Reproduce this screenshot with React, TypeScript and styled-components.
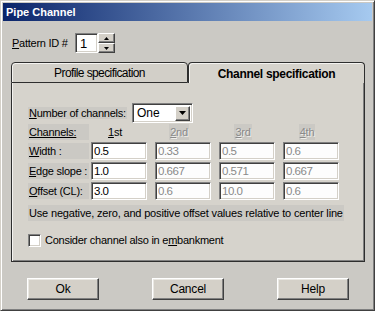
import React from 'react'
import styled, { createGlobalStyle, css } from 'styled-components'

const GlobalStyle = createGlobalStyle`
  html, body {
    margin: 0;
    padding: 0;
    background: #cbc9c4;
  }
  body {
    font-family: 'Liberation Sans', Arial, sans-serif;
    font-size: 11px;
    letter-spacing: -0.25px;
    color: #000;
  }
`

const sunken = css`
  box-sizing: border-box;
  border: 1px solid;
  border-color: #808080 #fff #fff #808080;
  box-shadow: inset 1px 1px #404040, inset -1px -1px #d4d0c8;
`

const raised = css`
  box-sizing: border-box;
  border: 1px solid;
  border-color: #fff #404040 #404040 #fff;
  box-shadow: inset -1px -1px #808080;
  background: #d4d0c8;
`

const Window = styled.div`
  width: 375px;
  height: 311px;
  box-sizing: border-box;
  background: #cbc9c4;
  border: 1px solid;
  border-color: #d4d0c8 #404040 #404040 #d4d0c8;
  box-shadow: inset 1px 1px #fff, inset -1px -1px #808080;
  padding: 2px;
  display: flex;
  flex-direction: column;
`

const TitleBar = styled.div`
  height: 18px;
  display: flex;
  align-items: center;
  padding-left: 3px;
  background: linear-gradient(to right, #0a246a, #a6caf0);
  color: #fff;
  font-weight: 700;
  font-size: 11px;
  letter-spacing: 0;
`

const Body = styled.div`
  display: flex;
  flex-direction: column;
  padding-top: 12px;
`

const PatternRow = styled.div`
  display: flex;
  align-items: center;
  height: 20px;
  margin-left: 9px;
`

const PatternLabel = styled.span`
  width: 63px;
`

const U = styled.span`
  text-decoration: underline;
`

const SpinInput = styled.div`
  ${sunken};
  width: 23px;
  height: 20px;
  background: #fff;
  display: flex;
  align-items: center;
  padding-left: 4px;
  font-size: 13px;
`

const SpinButtons = styled.div`
  display: flex;
  flex-direction: column;
  width: 17px;
  height: 20px;
`

const SpinButton = styled.div`
  ${raised};
  flex: 1;
  display: flex;
  align-items: center;
  justify-content: center;
`

const Tabs = styled.div`
  margin: 9px 7px 0 8px;
  display: flex;
  flex-direction: column;
`

const TabStrip = styled.div`
  display: flex;
  height: 21px;
`

const Tab = styled.div<{ $active?: boolean }>`
  flex: 1;
  box-sizing: border-box;
  display: flex;
  align-items: center;
  justify-content: center;
  border: 1px solid #2e2e2e;
  border-bottom: ${p => (p.$active ? 'none' : '1px solid #2e2e2e')};
  border-radius: 4px 4px 0 0;
  box-shadow: inset 1px 1px #f4f3f0;
  background: ${p => (p.$active ? '#d6d3cc' : '#d2cfc8')};
  font-size: 12px;
  font-weight: ${p => (p.$active ? 700 : 400)};
  letter-spacing: ${p => (p.$active ? '-0.3px' : '-0.6px')};
  padding-top: 1px;
`

const Panel = styled.div`
  height: 179px;
  box-sizing: border-box;
  border: 1px solid #2e2e2e;
  border-top: none;
  box-shadow: inset 1px 0 #f4f3f0, inset -1px -1px #808080;
  background: #d6d3cc;
  padding: 20px 0 0 16px;
  display: flex;
  flex-direction: column;
  align-items: flex-start;
`

const Caption = styled.span<{ $disabled?: boolean }>`
  background: ${p => (p.$disabled ? '#cbc9c4' : 'transparent')};
  white-space: nowrap;
  padding: 0 1px;
  line-height: 16px;
  color: ${p => (p.$disabled ? '#8a8a8a' : '#000')};
  text-shadow: ${p => (p.$disabled ? '1px 1px #f0efec' : 'none')};
`

const CountRow = styled.div`
  display: flex;
  align-items: center;
  height: 20px;
`

const CountLabel = styled.div`
  width: 104px;
`

const CountCaption = styled.span`
  background: #cbc9c4;
  white-space: nowrap;
  padding: 0 1px;
  line-height: 16px;
`

const Combo = styled.div`
  ${sunken};
  width: 61px;
  height: 20px;
  background: #fff;
  display: flex;
  align-items: center;
  padding: 2px 2px 2px 4px;
  font-size: 12px;
  letter-spacing: 0;
`

const ComboText = styled.span`
  flex: 1;
`

const DropButton = styled.div`
  ${raised};
  width: 15px;
  height: 15px;
  display: flex;
  align-items: center;
  justify-content: center;
`

const Grid = styled.div`
  margin-top: 1px;
  display: grid;
  grid-template-columns: 55px repeat(4, 56px);
  grid-template-rows: 16px repeat(3, 18px);
  column-gap: 8px;
  row-gap: 2px;
  align-items: center;
`

const RowLabel = styled.div`
  width: 60px;
  background: #cbc9c4;
  white-space: nowrap;
  line-height: 16px;
  padding-left: 1px;
`

const ColHead = styled.div`
  display: flex;
  justify-content: center;
  padding-right: 8px;
`

const Field = styled.input`
  ${sunken};
  width: 56px;
  height: 18px;
  margin: 0;
  padding: 0 0 0 2px;
  background: #fff;
  font-family: 'Liberation Sans', Arial, sans-serif;
  font-size: 11.5px;
  letter-spacing: -0.5px;
  color: #000;
  outline: none;
  &:disabled {
    color: #8a8a8a;
    background: #fdfdfd;
  }
`

const Note = styled.div`
  margin-top: 5px;
  height: 16px;
  line-height: 16px;
  background: #cbc9c4;
  padding: 0 1px;
  white-space: nowrap;
  letter-spacing: -0.17px;
`

const CheckRow = styled.label`
  margin-top: 11px;
  height: 16px;
  display: flex;
  align-items: center;
  gap: 4px;
`

const CheckBox = styled.span`
  ${sunken};
  width: 13px;
  height: 13px;
  background: #fff;
`

const ButtonRow = styled.div`
  display: flex;
  gap: 53px;
  margin-top: 16px;
  padding-left: 24px;
`

const Button = styled.button`
  ${raised};
  width: 72px;
  height: 22px;
  margin: 0;
  padding: 0;
  font-family: 'Liberation Sans', Arial, sans-serif;
  font-size: 12px;
  letter-spacing: -0.2px;
  color: #000;
  box-shadow: inset -1px -1px #808080, inset 1px 1px #eae8e3;
`

const Arrow = ({ dir, size }: { dir: 'up' | 'down'; size: number }) => {
  const h = Math.ceil(size / 2)
  return (
    <svg width={size} height={h} viewBox={`0 0 ${size} ${h}`}>
      {dir === 'up' ? (
        <polygon points={`0,${h} ${size},${h} ${size / 2},0`} fill="#000" />
      ) : (
        <polygon points={`0,0 ${size},0 ${size / 2},${h}`} fill="#000" />
      )}
    </svg>
  )
}

const rows = [
  { label: <><U>W</U>idth :</>, values: ['0.5', '0.33', '0.5', '0.6'] },
  { label: <><U>E</U>dge slope :</>, values: ['1.0', '0.667', '0.571', '0.667'] },
  { label: <><U>O</U>ffset (CL):</>, values: ['3.0', '0.6', '10.0', '0.6'] },
]

const heads = ['1', '2', '3', '4']
const suffix = ['st', 'nd', 'rd', 'th']

export default function App() {
  return (
    <>
      <GlobalStyle />
      <Window>
        <TitleBar>Pipe Channel</TitleBar>
        <Body>
          <PatternRow>
            <PatternLabel><U>P</U>attern ID #</PatternLabel>
            <SpinInput>1</SpinInput>
            <SpinButtons>
              <SpinButton><Arrow dir="up" size={5} /></SpinButton>
              <SpinButton><Arrow dir="down" size={5} /></SpinButton>
            </SpinButtons>
          </PatternRow>

          <Tabs>
            <TabStrip>
              <Tab>Profile specification</Tab>
              <Tab $active>Channel specification</Tab>
            </TabStrip>
            <Panel>
              <CountRow>
                <CountLabel>
                  <CountCaption><U>N</U>umber of channels:</CountCaption>
                </CountLabel>
                <Combo>
                  <ComboText>One</ComboText>
                  <DropButton><Arrow dir="down" size={7} /></DropButton>
                </Combo>
              </CountRow>

              <Grid>
                <RowLabel><U>Channels:</U></RowLabel>
                {heads.map((h, i) => (
                  <ColHead key={h}>
                    <Caption $disabled={i > 0}>
                      <U>{h}</U>{suffix[i]}
                    </Caption>
                  </ColHead>
                ))}
                {rows.map((r, ri) => (
                  <React.Fragment key={ri}>
                    <RowLabel>{r.label}</RowLabel>
                    {r.values.map((v, i) => (
                      <Field key={i} defaultValue={v} disabled={i > 0} />
                    ))}
                  </React.Fragment>
                ))}
              </Grid>

              <Note>Use negative, zero, and positive offset values relative to center line</Note>

              <CheckRow>
                <CheckBox />
                <span>Consider channel also in e<U>m</U>bankment</span>
              </CheckRow>
            </Panel>
          </Tabs>

          <ButtonRow>
            <Button>Ok</Button>
            <Button>Cancel</Button>
            <Button>Help</Button>
          </ButtonRow>
        </Body>
      </Window>
    </>
  )
}
